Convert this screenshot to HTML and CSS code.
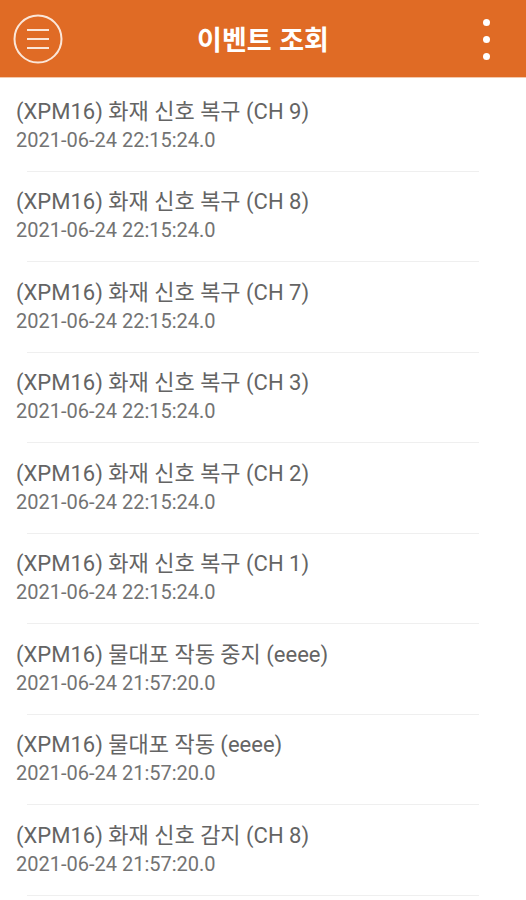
FILE: index.html
```html
<html lang="ko">
<head>
	<meta charset="UTF-8">
	<title>이벤트 조회</title>
	<link rel="stylesheet" href="styles.css">
</head>
<body>
	<div class="header">
		<span class="menuBtn">
			<svg width="52" height="52" viewBox="0 0 52 52">
				<circle cx="26" cy="26" r="23.5" fill="none" stroke="#fbe6d8" stroke-width="2"/>
				<line x1="15" y1="17" x2="37" y2="17" stroke="#fbe6d8" stroke-width="2"/>
				<line x1="15" y1="26" x2="37" y2="26" stroke="#fbe6d8" stroke-width="2"/>
				<line x1="15" y1="35" x2="37" y2="35" stroke="#fbe6d8" stroke-width="2"/>
			</svg>
		</span>
		<h1 class="title">이벤트 조회</h1>
		<span class="moreBtn">
			<i></i><i></i><i></i>
		</span>
	</div>
	<ul class="eventList">
		<li><p class="name">(XPM16) 화재 신호 복구 (CH 9)</p><p class="time">2021-06-24 22:15:24.0</p></li>
		<li><p class="name">(XPM16) 화재 신호 복구 (CH 8)</p><p class="time">2021-06-24 22:15:24.0</p></li>
		<li><p class="name">(XPM16) 화재 신호 복구 (CH 7)</p><p class="time">2021-06-24 22:15:24.0</p></li>
		<li><p class="name">(XPM16) 화재 신호 복구 (CH 3)</p><p class="time">2021-06-24 22:15:24.0</p></li>
		<li><p class="name">(XPM16) 화재 신호 복구 (CH 2)</p><p class="time">2021-06-24 22:15:24.0</p></li>
		<li><p class="name">(XPM16) 화재 신호 복구 (CH 1)</p><p class="time">2021-06-24 22:15:24.0</p></li>
		<li><p class="name">(XPM16) 물대포 작동 중지 (eeee)</p><p class="time">2021-06-24 21:57:20.0</p></li>
		<li><p class="name">(XPM16) 물대포 작동 (eeee)</p><p class="time">2021-06-24 21:57:20.0</p></li>
		<li><p class="name">(XPM16) 화재 신호 감지 (CH 8)</p><p class="time">2021-06-24 21:57:20.0</p></li>
	</ul>
</body>
</html>
```
FILE: styles.css
```css
*{
	margin: 0px;
	padding: 0px;
	list-style: none;
}

html, body{
	background: #fff;
	overflow: hidden;
}

body{
	width: 526px;
	height: 900px;
	font-family: Roboto, "Noto Sans CJK KR", sans-serif;
}

.header{
	height: 77px;
	background: #e06b25;
	display: grid;
	grid-template-columns: 76px 1fr 76px;
	align-items: center;
	padding: 0px 12px;
	border-bottom: 1px solid #f3c9ad;
}

.header .menuBtn{
	width: 52px;
	height: 52px;
	display: flex;
}

.header .title{
	text-align: center;
	color: #fff;
	font-family: "Noto Sans CJK KR", sans-serif;
	font-size: 27px;
	font-weight: bold;
}

.header .moreBtn{
	justify-self: end;
	display: flex;
	flex-direction: column;
	gap: 10px;
	margin: 2px 24px 0px 0px;
}

.header .moreBtn i{
	display: block;
	width: 7px;
	height: 7px;
	border-radius: 50%;
	background: #fff;
}

.eventList{
	padding-top: 3px;
}

.eventList li{
	padding: 15.5px 0px 0px 16px;
}

.eventList li::after{
	content: '';
	display: block;
	margin: 16px 0px 0px 11px;
	width: 452px;
	height: 1px;
	background: #efefef;
}

.eventList li .name{
	font-size: 22px;
	line-height: 29px;
	color: #646464;
}

.eventList li .time{
	font-size: 20px;
	line-height: 29px;
	color: #737373;
}
```
